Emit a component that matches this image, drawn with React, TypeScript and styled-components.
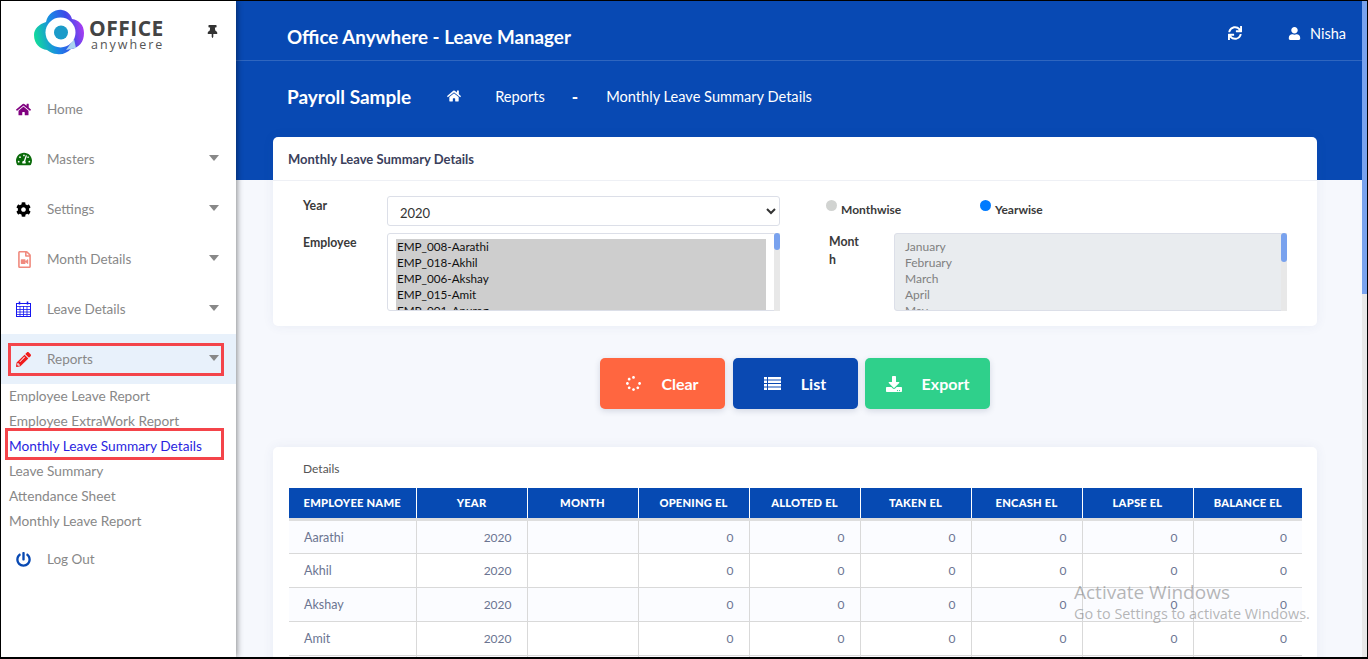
import React from 'react';
import styled, { createGlobalStyle } from 'styled-components';
import {
  FaHome,
  FaTachometerAlt,
  FaCog,
  FaRegFileVideo,
  FaPencilAlt,
  FaPowerOff,
  FaThumbtack,
  FaSync,
  FaUser,
  FaSpinner,
  FaDownload,
} from 'react-icons/fa';

const GlobalStyle = createGlobalStyle`
  * { box-sizing: border-box; }
  html, body { margin: 0; padding: 0; height: 100%; overflow: hidden; }
  body { font-family: Lato, "Open Sans", sans-serif; }
`;

const Frame = styled.div`
  display: flex;
  width: 1368px;
  height: 659px;
  border: 1px solid #000;
  border-bottom-width: 2px;
  overflow: hidden;
  background: #f6f8fd;
  position: relative;
`;

const Sidebar = styled.aside`
  flex: 0 0 235px;
  background: #fff;
  box-shadow: 1px 0 6px rgba(0, 0, 0, 0.45);
  position: relative;
  z-index: 2;
`;

const LogoRow = styled.div`
  height: 83px;
  display: flex;
  align-items: flex-start;
  padding: 8px 0 0 33px;
`;

const LogoText = styled.div`
  margin: 8px 0 0 5px;
  display: flex;
  flex-direction: column;
  font-family: "Open Sans", sans-serif;
  color: #444;
`;

const LogoOffice = styled.span`
  font-size: 21px;
  font-weight: 700;
  line-height: 22px;
  letter-spacing: 0.5px;
`;

const LogoAnywhere = styled.span`
  font-size: 12.5px;
  line-height: 12px;
  letter-spacing: 2px;
  margin-left: 2px;
  color: #555;
`;

const Pin = styled.span`
  margin: 16px 0 0 42px;
  color: #333;
  font-size: 13px;
  line-height: 13px;
`;

const MenuItem = styled.a<{ $active?: boolean }>`
  position: relative;
  display: flex;
  align-items: center;
  height: 50px;
  padding: 0 17px 0 15px;
  background: ${(p) => (p.$active ? '#e8f1fb' : 'transparent')};
  color: #888;
  font-size: 13.5px;
`;

const MenuIcon = styled.span<{ $color: string }>`
  flex: 0 0 31px;
  display: flex;
  align-items: center;
  color: ${(p) => p.$color};
  font-size: 15px;
`;

const Caret = styled.span`
  margin-left: auto;
  margin-bottom: 3px;
  border-left: 5.5px solid transparent;
  border-right: 5.5px solid transparent;
  border-top: 6px solid #888;
`;

const SubItem = styled.a<{ $current?: boolean }>`
  position: relative;
  display: block;
  height: 25px;
  line-height: 23px;
  padding-left: 8px;
  font-size: 13.7px;
  color: ${(p) => (p.$current ? '#2a1fe0' : '#888')};
`;

const Callout = styled.span<{ $top: number; $bottom: number; $left: number }>`
  position: absolute;
  top: ${(p) => p.$top}px;
  bottom: ${(p) => p.$bottom}px;
  left: ${(p) => p.$left}px;
  right: 12px;
  border: 3px solid #f4444a;
`;

const Main = styled.main`
  flex: 1;
  min-width: 0;
  display: flex;
`;

const Pane = styled.div`
  flex: 1;
  min-width: 0;
  overflow: hidden;
`;

const PageTrack = styled.div`
  flex: 0 0 5px;
  background: #e8e8e8;
`;

const PageThumb = styled.div`
  height: 293px;
  background: #79a2ee;
`;

const Banner = styled.header`
  height: 179px;
  background: #0849b3;
  color: #fff;
`;

const TopBar = styled.div`
  height: 60px;
  display: flex;
  align-items: center;
  padding: 0 16px 0 51px;
  border-bottom: 1px solid rgba(255, 255, 255, 0.16);
`;

const AppTitle = styled.div`
  font-size: 18.8px;
  font-weight: 700;
  margin-right: auto;
  padding-top: 11px;
`;

const TopAction = styled.span`
  display: flex;
  align-items: center;
  gap: 9px;
  font-size: 14.5px;
  margin-left: 46px;
  padding-top: 5px;
`;

const Crumbs = styled.div`
  height: 72px;
  display: flex;
  align-items: center;
  padding: 0 0 2px 51px;
  font-size: 14.6px;
`;

const CrumbTitle = styled.div`
  font-size: 19px;
  font-weight: 700;
  margin-right: 36px;
`;

const CrumbText = styled.span`
  margin-left: 34px;
`;

const CrumbDash = styled.span`
  margin-left: 27px;
  font-weight: 900;
  font-size: 17px;
  margin-right: -6px;
`;

const Content = styled.div`
  margin-top: -43px;
  padding: 0 45px 0 37px;
`;

const Card = styled.section`
  background: #fff;
  border-radius: 5px;
  box-shadow: 0 0 12px rgba(60, 70, 130, 0.07);
`;

const CardHeader = styled.div`
  height: 44px;
  display: flex;
  align-items: center;
  padding-left: 15px;
  font-size: 13px;
  font-weight: 700;
  color: #3b3f5c;
  border-bottom: 1px solid #eef0f5;
`;

const FormGrid = styled.div`
  display: grid;
  grid-template-columns: 84px 393px 114px 393px;
  grid-template-rows: 30px 78px;
  row-gap: 7px;
  padding: 15px 30px;
`;

const FieldLabel = styled.label<{ $narrow?: boolean }>`
  font-size: 12.3px;
  font-weight: 700;
  line-height: 18px;
  color: #3a3a3a;
  padding-top: ${(p) => (p.$narrow ? '0' : '1px')};
  max-width: ${(p) => (p.$narrow ? '33px' : 'none')};
  word-break: ${(p) => (p.$narrow ? 'break-all' : 'normal')};
  margin-left: ${(p) => (p.$narrow ? '49px' : '0')};
`;

const RadioCell = styled.div`
  margin-left: 49px;
  grid-column: 3 / 5;
  display: flex;
  align-items: center;
  height: 26px;
`;

const YearSelect = styled.select`
  height: 30px;
  width: 393px;
  border: 1px solid #dcdfe8;
  border-radius: 3px;
  background: #fff;
  padding: 3px 0 0 8px;
  font: 13px Lato, sans-serif;
  color: #333;
`;

const ListFrame = styled.div`
  position: relative;
  width: 393px;
  height: 78px;
`;

const ListBox = styled.select`
  width: 100%;
  height: 100%;
  border: 1px solid #dcdfe8;
  border-radius: 3px;
  padding: 5px 13px 5px 8px;
  font: 11.7px Lato, sans-serif;
  color: #453f55;
  overflow: hidden;
  background: #fff;

  &:disabled {
    background: #e9ecef;
    font-size: 12px;
    color: #6b6b78;
    opacity: 1;
    padding-left: 9px;
  }
  option { height: 16px; min-height: 16px; line-height: 16px; padding: 0 1px; }
`;

const ListTrack = styled.div`
  position: absolute;
  top: 0;
  right: 0;
  bottom: 0;
  width: 6px;
  background: #e8e8e8;
`;

const ListThumb = styled.div<{ $h: number }>`
  height: ${(p) => p.$h}px;
  background: #79a2ee;
  border-radius: 3px;
`;

const RadioOption = styled.label`
  width: 154px;
  display: flex;
  align-items: center;
  gap: 4px;
  font-size: 12px;
  font-weight: 700;
  color: #3a3a3a;
  margin-left: -3px;
  &:last-child { margin-left: 0; }
`;

const RadioDot = styled.input`
  appearance: none;
  width: 11px;
  height: 11px;
  margin: 0 0 7px;
  border-radius: 50%;
  background: #d1d3d1;
  &:checked { background: #007bff; }
`;

const ButtonRow = styled.div`
  display: flex;
  justify-content: center;
  gap: 7.5px;
  margin: 32px 0 38px;
`;

const ActionButton = styled.button<{ $bg: string }>`
  width: 125px;
  height: 51px;
  display: flex;
  align-items: center;
  justify-content: center;
  gap: 20px;
  border: 0;
  border-radius: 5px;
  background: ${(p) => p.$bg};
  box-shadow: 0 2px 6px rgba(40, 50, 90, 0.16);
  color: #fff;
  font: 700 16px Lato, sans-serif;
`;

const DetailsCard = styled(Card)`
  padding: 13px 15px 16px 16px;
`;

const DetailsTitle = styled.div`
  font-size: 12px;
  line-height: 18px;
  color: #555;
  padding-left: 14px;
  margin-bottom: 10px;
`;

const Table = styled.table`
  width: 1013px;
  table-layout: fixed;
  border-collapse: collapse;
  font-size: 12px;
`;

const HeadCell = styled.th<{ $w: number }>`
  width: ${(p) => p.$w}px;
  height: 31px;
  padding: 0;
  background: #064ab3;
  color: #fff;
  font-size: 11.2px;
  font-weight: 900;
  letter-spacing: 0.2px;
  text-align: center;
  border-left: 1px solid #fff;
  border-bottom: 3px solid #dedede;
  &:first-child { border-left: 0; }
`;

const Row = styled.tr`
  &:nth-child(odd) { background: #fbfcff; }
`;

const Cell = styled.td<{ $left?: boolean }>`
  height: 34px;
  padding: ${(p) => (p.$left ? '1px 0 0 15px' : '1px 15px 0 0')};
  text-align: ${(p) => (p.$left ? 'left' : 'right')};
  font-size: ${(p) => (p.$left ? '12.5px' : '12px')};
  color: #6b7591;
  border-left: 1px solid #d9d9d9;
  border-bottom: 1px solid #d9d9d9;
  &:first-child { border-left: 0; }
`;

const Watermark = styled.div`
  position: absolute;
  left: 1073px;
  top: 580px;
  z-index: 3;
  pointer-events: none;
  color: rgba(110, 110, 110, 0.5);
  font-family: "Open Sans", sans-serif;
`;

const WatermarkHead = styled.div`
  font-size: 19px;
  line-height: 23px;
`;

const WatermarkSub = styled.div`
  font-size: 14.4px;
  line-height: 20px;
`;

const LogoMark = () => (
  <svg width="50" height="46" viewBox="0 0 50 46">
    <defs>
      <linearGradient id="cloud" x1="0" y1="0.6" x2="1" y2="0.4">
        <stop offset="0" stopColor="#12dc9a" />
        <stop offset="0.4" stopColor="#1a86e6" />
        <stop offset="0.7" stopColor="#3a4be8" />
        <stop offset="1" stopColor="#b03cf2" />
      </linearGradient>
    </defs>
    <path
      d="M12 13C14 4 22 0 28 1c6 1 9 5 10 9 7 1 12 6 12 14 0 9-5 15-13 16-4 4-9 6-14 5-4 0-7-2-10-4C6 40 0 35 0 26c0-6 5-11 12-13z"
      fill="url(#cloud)"
    />
    <path d="M40 30l2 9-10 2z" fill="#a9d4f0" />
    <circle cx="26.5" cy="23.5" r="15" fill="#fff" />
    <circle cx="27" cy="23.5" r="7" fill="#1b9bc9" />
  </svg>
);

const CalendarIcon = () => (
  <svg width="15" height="16" viewBox="0 0 15 16" fill="none" stroke="#1616f0" strokeWidth="0.8">
    <rect x="0.5" y="2.5" width="14" height="13" strokeWidth="1" />
    <path d="M0 5.5h15M0 8.5h15M0 11h15M0 13.5h15M4 5v11M7.5 5v11M11 5v11" />
    <path d="M3.5 0.5v3M11.5 0.5v3" strokeWidth="1.5" />
  </svg>
);

const ListIcon = () => (
  <svg width="17" height="13" viewBox="0 0 17 13" fill="currentColor">
    <path d="M0 0h3v2.5H0zM4 0h13v2.5H4zM0 3.5h3V6H0zM4 3.5h13V6H4zM0 7h3v2.5H0zM4 7h13v2.5H4zM0 10.5h3V13H0zM4 10.5h13V13H4z" />
  </svg>
);

const columns: [string, number][] = [
  ['Employee Name', 127],
  ['Year', 111],
  ['Month', 111],
  ['Opening EL', 111],
  ['Alloted EL', 111],
  ['Taken EL', 111],
  ['Encash EL', 111],
  ['Lapse EL', 111],
  ['Balance EL', 109],
];

const employees = [
  'EMP_008-Aarathi', 'EMP_018-Akhil', 'EMP_006-Akshay', 'EMP_015-Amit', 'EMP_001-Anurag',
];

const months = ['January', 'February', 'March', 'April', 'May'];

const reports = [
  'Employee Leave Report',
  'Employee ExtraWork Report',
  'Monthly Leave Summary Details',
  'Leave Summary',
  'Attendance Sheet',
  'Monthly Leave Report',
];

const App: React.FC = () => {
  return (
    <Frame>
      <GlobalStyle />
      <Sidebar>
        <LogoRow>
          <LogoMark />
          <LogoText>
            <LogoOffice>OFFICE</LogoOffice>
            <LogoAnywhere>anywhere</LogoAnywhere>
          </LogoText>
          <Pin><FaThumbtack /></Pin>
        </LogoRow>
        <MenuItem>
          <MenuIcon $color="#800080"><FaHome /></MenuIcon>Home
        </MenuItem>
        <MenuItem>
          <MenuIcon $color="#0a6b0a"><FaTachometerAlt size={16} /></MenuIcon>Masters<Caret />
        </MenuItem>
        <MenuItem>
          <MenuIcon $color="#000"><FaCog /></MenuIcon>Settings<Caret />
        </MenuItem>
        <MenuItem>
          <MenuIcon $color="#f08a7e"><FaRegFileVideo size={17} /></MenuIcon>Month Details<Caret />
        </MenuItem>
        <MenuItem>
          <MenuIcon $color="#1616f0"><CalendarIcon /></MenuIcon>Leave Details<Caret />
        </MenuItem>
        <MenuItem $active>
          <MenuIcon $color="#f01c1c"><FaPencilAlt /></MenuIcon>Reports<Caret />
          <Callout $top={9} $bottom={8} $left={7} />
        </MenuItem>
        {reports.map((name, i) => (
          <SubItem key={name} $current={i === 2}>
            {name}
            {i === 2 && <Callout $top={-6} $bottom={-1} $left={4} />}
          </SubItem>
        ))}
        <MenuItem>
          <MenuIcon $color="#0849b3"><FaPowerOff /></MenuIcon>Log Out
        </MenuItem>
      </Sidebar>

      <Main>
        <Pane>
          <Banner>
            <TopBar>
              <AppTitle>Office Anywhere - Leave Manager</AppTitle>
              <TopAction><FaSync size={14} /></TopAction>
              <TopAction><FaUser size={13} />Nisha</TopAction>
            </TopBar>
            <Crumbs>
              <CrumbTitle>Payroll Sample</CrumbTitle>
              <FaHome size={14} />
              <CrumbText>Reports</CrumbText>
              <CrumbDash>-</CrumbDash>
              <CrumbText>Monthly Leave Summary Details</CrumbText>
            </Crumbs>
          </Banner>

          <Content>
            <Card>
              <CardHeader>Monthly Leave Summary Details</CardHeader>
              <FormGrid>
                <FieldLabel>Year</FieldLabel>
                <YearSelect defaultValue="2020">
                  <option>2019</option>
                  <option>2020</option>
                  <option>2021</option>
                </YearSelect>
                <RadioCell>
                  <RadioOption>
                    <RadioDot type="radio" name="mode" />Monthwise
                  </RadioOption>
                  <RadioOption>
                    <RadioDot type="radio" name="mode" defaultChecked />Yearwise
                  </RadioOption>
                </RadioCell>
                <FieldLabel>Employee</FieldLabel>
                <ListFrame>
                  <ListBox multiple defaultValue={employees}>
                    {employees.map((e) => <option key={e}>{e}</option>)}
                  </ListBox>
                  <ListTrack><ListThumb $h={17} /></ListTrack>
                </ListFrame>
                <FieldLabel $narrow>Month</FieldLabel>
                <ListFrame>
                  <ListBox multiple disabled>
                    {months.map((m) => <option key={m}>{m}</option>)}
                  </ListBox>
                  <ListTrack><ListThumb $h={29} /></ListTrack>
                </ListFrame>
              </FormGrid>
            </Card>

            <ButtonRow>
              <ActionButton $bg="#ff6640"><FaSpinner size={15} />Clear</ActionButton>
              <ActionButton $bg="#0a49b2"><ListIcon />List</ActionButton>
              <ActionButton $bg="#2fd08b"><FaDownload size={16} />Export</ActionButton>
            </ButtonRow>

            <DetailsCard>
              <DetailsTitle>Details</DetailsTitle>
              <Table>
                <thead>
                  <tr>
                    {columns.map(([label, w]) => (
                      <HeadCell key={label} $w={w}>{label.toUpperCase()}</HeadCell>
                    ))}
                  </tr>
                </thead>
                <tbody>
                  {employees.slice(0, 4).map((e) => (
                    <Row key={e}>
                      <Cell $left>{e.split('-')[1]}</Cell>
                      <Cell>2020</Cell>
                      <Cell />
                      {[0, 1, 2, 3, 4, 5].map((n) => <Cell key={n}>0</Cell>)}
                    </Row>
                  ))}
                  <Row>
                    {columns.map(([label]) => <Cell key={label} />)}
                  </Row>
                </tbody>
              </Table>
            </DetailsCard>
          </Content>
        </Pane>
        <PageTrack><PageThumb /></PageTrack>
      </Main>

      <Watermark>
        <WatermarkHead>Activate Windows</WatermarkHead>
        <WatermarkSub>Go to Settings to activate Windows.</WatermarkSub>
      </Watermark>
    </Frame>
  );
};

export default App;
